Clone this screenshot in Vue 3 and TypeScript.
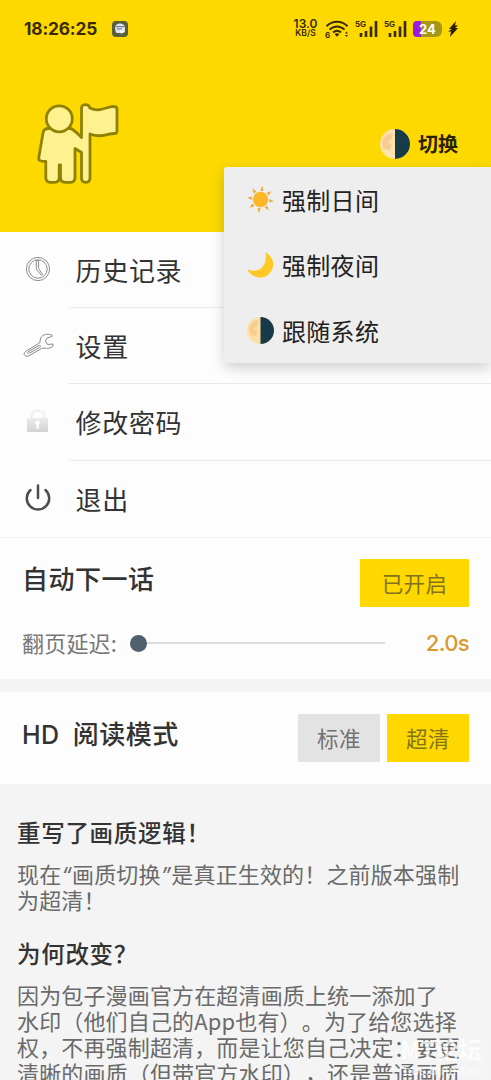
<script setup lang="ts">
interface ThemeOption {
  icon: string
  label: string
}
interface MenuRow {
  icon: string
  label: string
}

const themeOptions: ThemeOption[] = [
  { icon: 'sun', label: '强制日间' },
  { icon: 'moon', label: '强制夜间' },
  { icon: 'half', label: '跟随系统' },
]

const menuRows: MenuRow[] = [
  { icon: 'clock', label: '历史记录' },
  { icon: 'wrench', label: '设置' },
  { icon: 'lock', label: '修改密码' },
  { icon: 'power', label: '退出' },
]

const rays: number[] = [0, 45, 90, 135, 180, 225, 270, 315]

const reasonLines: string[] = [
  '因为包子漫画官方在超清画质上统一添加了',
  '水印（他们自己的App也有）。为了给您选择',
  '权，不再强制超清，而是让您自己决定：要更',
  '清晰的画质（但带官方水印），还是普通画质',
]
</script>

<template>
  <div class="screen">
    <header class="hero">
      <div class="status">
        <span class="time">18:26:25</span>
        <svg class="app-badge" viewBox="0 0 16 16">
          <rect width="16" height="16" rx="4" fill="#56603c" />
          <path d="M3 6.500a5 4 0 0 1 10 0V10a2 2 0 0 1-2 2H5.500a2 2 0 0 1-2-2z" fill="#dfe3f5" />
          <path d="M3.500 5.700h9M5 8h5" stroke="#5b6472" stroke-width="1" />
          <path d="m7.500 8.500 5 1.500-2.300 1-1 2.500z" fill="#fff" />
        </svg>
        <span class="grow"></span>
        <span class="speed"><b>13.0</b><i>KB/S</i></span>
        <svg class="wifi" viewBox="0 0 24 18">
          <g fill="none" stroke="#3a2a00" stroke-width="2">
            <path d="M1.500 6.300c6-6 15-6 21 0" />
            <path d="M4.500 9.600c4.500-4.300 10.500-4.300 15 0" />
            <path d="M8 12.600c2.500-2.300 5.500-2.300 8 0" />
          </g>
          <path d="m9.500 14 2.500 2.800 2.500-2.800q-2.500-1.600-5 0z" fill="#3a2a00" />
          <path d="m20 13.500 1.500-2 1.500 2zM20 15l1.500 2 1.500-2z" fill="#3a2a00" />
          <text x="0" y="17.500" class="tiny">6</text>
        </svg>
        <svg v-for="n in 2" :key="n" class="signal" viewBox="0 0 23 18">
          <text x="0" y="6.800" class="tiny">5G</text>
          <path d="M6 13v4M11 11v6M16 6.500V17M21 1v16" stroke="#3a2a00" stroke-width="2.600" />
        </svg>
        <span class="battery">24</span>
        <svg class="bolt" viewBox="0 0 10 16"><path d="M8 0 1 8h3L0 10.500h3L2 16l8-9H7l3-2.500H7z" fill="#2b1f00" /></svg>
      </div>
      <svg class="avatar" viewBox="0 0 84 84">
        <g fill="#fff18f" stroke="#8f8200" stroke-width="2.800" stroke-linejoin="round">
          <path d="M7 31c.5-3 2.500-4.500 5.500-4.500H34c3 0 5.500 3.500 11.500 9V6c0-4.500 7-4.500 8.500 0 10 5 17-2 24-1.500 2 0 3 1 3 3V29c0 1.500-1 2.500-2.500 2.500-8 0-13 5-24.500.5V76c0 3-1.500 4.300-4.300 4.300S45.500 79 45.500 76V50.500L39 46.500V75c0 3.500-1.500 5.300-4.500 5.300H29c-3 0-4.500-1.800-4.500-4.800V63h-1.300v12.500c0 3-1.700 4.800-4.700 4.800h-4c-3 0-4.700-1.800-4.700-4.800V59.500c-6 0-7.500-1-7-4z" />
          <circle cx="23.300" cy="16.800" r="13" />
        </g>
      </svg>
      <div class="switcher">
        <svg class="half" viewBox="0 0 30 30">
          <circle cx="15" cy="15" r="15" fill="#ffe2ad" /><path d="M15 0a15 15 0 0 1 0 30z" fill="#173b48" />
          <path d="M3 10q4-7 10-6l-1 6-4 3 4 3-2 5-6-1q-3-5-1-10" fill="#f8cd94" />
        </svg>
        <span>切换</span>
      </div>
    </header>

    <nav class="menu">
      <div v-for="row in menuRows" :key="row.label" class="row">
        <svg v-if="row.icon === 'clock'" class="row-icon" viewBox="0 0 32 32" fill="none" stroke="#8c8c8c" stroke-width="1">
          <circle cx="16" cy="16" r="11.600" /><circle cx="16" cy="16" r="9.200" />
          <path d="M14.300 7.500h2.300v8l4 6-1 .8-5.300-6z" />
        </svg>
        <svg v-else-if="row.icon === 'wrench'" class="row-icon" viewBox="0 0 32 32" fill="none" stroke="#8a8a8a" stroke-width="1" stroke-linejoin="round">
          <path d="M3.500 22.500 17.500 14c.8-1 .5-3.500 1.500-5.500 1.500-3 6-4 11-2.500v1.500l-5 1.500-1.500 3 2 3.500 5.500-.5v2c-2.500 2.500-6 3-8.500 2l-3 .5L6.500 27C2.500 28 .5 24.500 3.500 22.500z" />
          <path d="m6.500 22.500 10.500-6c2-.5 2.300 1.200.5 2l-10 5.500c-2 1-3-.5-1-1.500z" />
        </svg>
        <svg v-else-if="row.icon === 'lock'" class="row-icon" viewBox="0 0 32 32">
          <defs><linearGradient id="lockFill" x2="0" y2="1"><stop stop-color="#ececec" /><stop offset="1" stop-color="#d2d2d2" /></linearGradient></defs>
          <path d="M9.500 14v-3c0-7 13-7 13 0v3" fill="none" stroke="#f0f0f0" stroke-width="2.500" />
          <rect x="5" y="13" width="21" height="14" rx="1" fill="url(#lockFill)" />
          <path d="M15.500 15.500a2.500 2.500 0 0 1 1.300 4.500v3.500h-2.600V20a2.500 2.500 0 0 1 1.300-4.500" fill="#fff" />
        </svg>
        <svg v-else class="row-icon" viewBox="0 0 32 32" fill="none" stroke="#4c4c4c" stroke-width="2.500" stroke-linecap="round">
          <path d="M16 3.500v12.500M8.500 8a11.200 11.200 0 1 0 15 0" />
        </svg>
        <div class="row-label">{{ row.label }}</div>
      </div>
    </nav>

    <section class="auto">
      <div class="line">
        <h2>自动下一话</h2>
        <button class="btn on wide">已开启</button>
      </div>
      <div class="delay">
        <span class="delay-label">翻页延迟:</span>
        <div class="track"><div class="knob"></div></div>
        <span class="delay-value">2.0s</span>
      </div>
    </section>

    <section class="mode">
      <h2><span class="hd">HD</span>阅读模式</h2>
      <div class="choices">
        <button class="btn">标准</button>
        <button class="btn on">超清</button>
      </div>
    </section>

    <section class="notes">
      <h3>重写了画质逻辑！</h3>
      <p>
        <span>现在<i>“</i>画质切换<i>”</i>是真正生效的！之前版本强制</span>
        <span>为超清！</span>
      </p>
      <h3>为何改变？</h3>
      <p><span v-for="t in reasonLines" :key="t">{{ t }}</span></p>
    </section>

    <div class="popup">
      <div v-for="o in themeOptions" :key="o.label" class="option">
        <svg v-if="o.icon === 'sun'" viewBox="0 0 28 28">
          <circle cx="14" cy="14" r="8" fill="#fdb827" />
          <path v-for="r in rays" :key="r" d="m12.300 4.800 1.700-5 1.700 5z" fill="#f0a838" :transform="`rotate(${r + 8} 14 14)`" />
        </svg>
        <svg v-else-if="o.icon === 'moon'" viewBox="0 0 28 28">
          <path d="M19 0c7 4 11 12 6 20C20 29 6 29 0 18c9 4 22 0 19-18z" fill="#ffca28" />
          <path d="M0 18c5 5 14 5 19 1-5 5-13 4-19-1" fill="#efad35" />
        </svg>
        <svg v-else viewBox="0 0 28 28">
          <circle cx="14" cy="14" r="14" fill="#ffe0a4" /><path d="M14 0a14 14 0 0 1 0 28z" fill="#173b48" />
          <path d="M3 9q4-7 9-6l-1 6-4 3 4 3-2 5-5-1q-3-5-1-10" fill="#f8cd90" />
        </svg>
        <span>{{ o.label }}</span>
      </div>
    </div>

    <div class="watermark"><b>MT论坛</b><span>bbs.binmt.cc</span></div>
  </div>
</template>

<style>
body { margin: 0; overflow: hidden; }
</style>

<style scoped>
* { box-sizing: border-box; }
.screen {
  position: relative; width: 491px; height: 1080px; overflow: hidden;
  background: #fdfdfd; color: #333;
  font-family: "Noto Sans CJK SC", sans-serif;
  text-spacing-trim: space-all;
}
.hero { position: relative; height: 232px; background: #fdd900; }
.status { display: flex; align-items: center; height: 57px; padding: 0 33px 0 24px; color: #3a2a00; font-family: Inter, sans-serif; }
.time { font-size: 17.300px; font-weight: 700; letter-spacing: -.15px; width: 88px; }
.app-badge { width: 16px; height: 16px; }
.grow { flex: 1; }
.speed { display: flex; flex-direction: column; align-items: center; width: 25px; margin-right: 7px; }
.speed b { font-size: 12px; line-height: 10px; font-weight: 600; }
.speed i { font-style: normal; font-size: 8.500px; line-height: 9px; font-weight: 600; }
.wifi { width: 24px; height: 18px; margin-right: 6px; }
.signal { width: 23px; height: 18px; margin-right: 6px; }
.tiny { font: 700 8px Inter, sans-serif; fill: #3a2a00; }
.battery { width: 29px; height: 16px; border-radius: 4px 6px 6px 4px; background: linear-gradient(90deg, #9a1be0 0 27%, #a59618 27%); color: #fff; font-size: 13px; line-height: 16px; font-weight: 700; text-align: center; margin-right: 6px; }
.bolt { width: 10px; height: 16px; }
.avatar { position: absolute; left: 36px; top: 102px; width: 84px; height: 84px; }
.switcher { position: absolute; left: 380px; top: 129px; display: flex; align-items: center; gap: 8px; height: 30px; font-size: 20px; font-weight: 700; color: #2a2100; white-space: nowrap; }
.switcher span { margin-top: -2px; }
.half { width: 30px; height: 30px; }
.menu { height: 306px; border-bottom: 1px solid #f2f2f2; }
.row { display: flex; height: 76.200px; padding-left: 22px; }
.row-icon { width: 32px; height: 32px; margin-top: 21px; flex: none; }
.row-label { flex: 1; margin-left: 15px; padding-left: 6.500px; border-bottom: 1px solid #e8e8e8; font-size: 26px; letter-spacing: .7px; line-height: 76px; }
.row:last-child .row-label { border: 0; }
h2 { margin: 0; font-size: 26px; font-weight: 500; letter-spacing: .5px; line-height: 38px; }
.auto { height: 141px; padding: 21px 22px 0; }
.line { display: flex; justify-content: space-between; }
.btn { width: 82px; height: 48px; border: 0; padding: 0; border-radius: 1px; background: #e3e3e3; color: #727272; font: 21.500px/48px "Noto Sans CJK SC", sans-serif; letter-spacing: .4px; }
.btn.on { background: #ffd800; color: #82731b; }
.btn.wide { width: 109px; }
.delay { display: flex; align-items: center; height: 32px; margin-top: 20px; }
.delay-label { width: 108px; margin-top: -2px; font-size: 22px; letter-spacing: .2px; color: #777; white-space: nowrap; }
.track { display: flex; align-items: center; width: 255px; height: 2px; background: #ddd; }
.knob { width: 17px; height: 17px; border-radius: 50%; background: #50606e; flex: none; }
.delay-value { flex: 1; text-align: right; color: #d9992f; font: 500 22px Inter, sans-serif; letter-spacing: -.6px; }
.mode { display: flex; justify-content: space-between; height: 105px; padding: 22px 22px 0; border-top: 13px solid #f4f4f4; }
.hd { margin-right: 13px; font-family: Inter, sans-serif; font-size: 25px; }
.choices { display: flex; gap: 7px; }
.notes { height: 296px; background: #f4f4f4; padding: 28px 17px 0; }
h3 { margin: 0 0 8px; font-size: 23.500px; font-weight: 500; letter-spacing: .7px; line-height: 40px; }
p { margin: 0 0 21px; color: #6a6a6a; font-size: 22px; letter-spacing: .15px; line-height: 26px; }
p span { display: block; height: 26px; white-space: nowrap; }
p i { font-family: Inter, sans-serif; }
.popup { position: absolute; left: 224px; top: 167px; width: 267px; height: 196px; background: #eee; border-radius: 3px 0 0 4px; box-shadow: 0 5px 14px rgba(0,0,0,.18); color: #222; }
.option { display: flex; align-items: center; gap: 8px; height: 65.500px; padding-left: 23px; font-size: 24px; letter-spacing: .3px; }
.option span { margin-top: -1px; }
.option svg { width: 27px; height: 27px; flex: none; }
.watermark { position: absolute; right: 9px; bottom: 3px; display: flex; flex-direction: column; align-items: flex-end; color: rgba(255,255,255,.76); }
.watermark b { font-size: 23.500px; line-height: 26px; font-weight: 700; }
.watermark span { font-size: 13px; line-height: 15px; }
</style>
